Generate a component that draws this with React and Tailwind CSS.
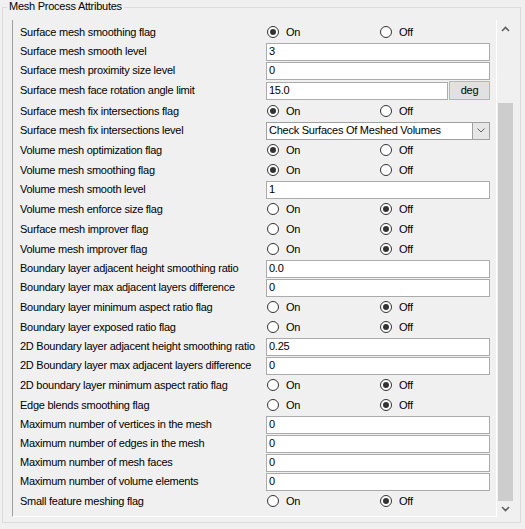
import React from 'react';

const rows = [
  { label: 'Surface mesh smoothing flag', type: 'radio', on: true },
  { label: 'Surface mesh smooth level', type: 'text', value: '3' },
  { label: 'Surface mesh proximity size level', type: 'text', value: '0' },
  { label: 'Surface mesh face rotation angle limit', type: 'unit', value: '15.0', unit: 'deg' },
  { label: 'Surface mesh fix intersections flag', type: 'radio', on: true },
  { label: 'Surface mesh fix intersections level', type: 'select', value: 'Check Surfaces Of Meshed Volumes' },
  { label: 'Volume mesh optimization flag', type: 'radio', on: true },
  { label: 'Volume mesh smoothing flag', type: 'radio', on: true },
  { label: 'Volume mesh smooth level', type: 'text', value: '1' },
  { label: 'Volume mesh enforce size flag', type: 'radio', on: false },
  { label: 'Surface mesh improver flag', type: 'radio', on: false },
  { label: 'Volume mesh improver flag', type: 'radio', on: false },
  { label: 'Boundary layer adjacent height smoothing ratio', type: 'text', value: '0.0' },
  { label: 'Boundary layer max adjacent layers difference', type: 'text', value: '0' },
  { label: 'Boundary layer minimum aspect ratio flag', type: 'radio', on: false },
  { label: 'Boundary layer exposed ratio flag', type: 'radio', on: false },
  { label: '2D Boundary layer adjacent height smoothing ratio', type: 'text', value: '0.25' },
  { label: '2D Boundary layer max adjacent layers difference', type: 'text', value: '0' },
  { label: '2D boundary layer minimum aspect ratio flag', type: 'radio', on: false },
  { label: 'Edge blends smoothing flag', type: 'radio', on: false },
  { label: 'Maximum number of vertices in the mesh', type: 'text', value: '0' },
  { label: 'Maximum number of edges in the mesh', type: 'text', value: '0' },
  { label: 'Maximum number of mesh faces', type: 'text', value: '0' },
  { label: 'Maximum number of volume elements', type: 'text', value: '0' },
  { label: 'Small feature meshing flag', type: 'radio', on: false },
];

const Radio = ({ checked, label }) => (
  <div className="flex items-center">
    <span className="w-[12px] h-[12px] rounded-full border border-[#333333] bg-white flex items-center justify-center">
      {checked && <span className="w-[6px] h-[6px] rounded-full bg-[#333333]" />}
    </span>
    <span className="ml-[7px]">{label}</span>
  </div>
);

const TextBox = ({ value, className = 'w-[224px]' }) => (
  <div className={`${className} h-[18px] border border-[#ababab] bg-white pl-[2px] flex items-center`}>
    {value}
  </div>
);

const Control = ({ row }) => {
  switch (row.type) {
    case 'radio':
      return (
        <div className="flex items-center pl-[1px]">
          <div className="w-[113px]">
            <Radio checked={row.on} label="On" />
          </div>
          <Radio checked={!row.on} label="Off" />
        </div>
      );
    case 'text':
      return <TextBox value={row.value} />;
    case 'unit':
      return (
        <div className="flex items-center gap-[1px]">
          <TextBox value={row.value} className="w-[182px]" />
          <div className="w-[41px] h-[19px] border border-[#f3a85a] bg-[#e1e1e1] flex items-center justify-center">
            {row.unit}
          </div>
        </div>
      );
    case 'select':
      return (
        <div className="w-[224px] h-[18px] border border-[#a0a0a0] bg-white flex">
          <div className="flex-1 pl-[2px] flex items-center">{row.value}</div>
          <div className="w-[17px] h-full bg-[#e6e6e6] border-l border-[#a0a0a0] flex items-center justify-center">
            <svg width="8" height="5" viewBox="0 0 8 5" fill="none">
              <path d="M0.5 0.5L4 4L7.5 0.5" stroke="#606060" strokeWidth="1" />
            </svg>
          </div>
        </div>
      );
    default:
      return null;
  }
};

const rowHeight = (type) => {
  if (type === 'radio') return 'h-[20px]';
  if (type === 'unit') return 'h-[21px]';
  return 'h-[19px]';
};

const Chevron = ({ up }) => (
  <svg width="9" height="6" viewBox="0 0 9 6" fill="none">
    <path
      d={up ? 'M1 5L4.5 1.5L8 5' : 'M1 1L4.5 4.5L8 1'}
      stroke="#606060"
      strokeWidth="1.6"
    />
  </svg>
);

export default function App() {
  return (
    <div
      className="w-[525px] h-[529px] bg-[#f0f0f0] pt-[7px] pl-[2px] text-[11px] tracking-[-0.25px] text-black"
      style={{ fontFamily: '"Liberation Sans", Arial, sans-serif' }}
    >
      <div className="relative w-[519px] h-[516px] border border-[#dcdcdc] pl-[9px] pt-[12px] flex">
        {/* Group title */}
        <span className="absolute left-[4px] top-[-8px] px-[2px] leading-[13px] bg-[#f0f0f0]">
          Mesh Process Attributes
        </span>

        {/* Attribute rows */}
        <div className="w-[485px] h-[497px] border-l border-r border-b border-l-[#a0a0a0] border-r-white border-b-white pt-[2px] pl-[7px] overflow-hidden">
          {rows.map((row) => (
            <div key={row.label} className={`flex items-center ${rowHeight(row.type)}`}>
              <div className="w-[246px] shrink-0 whitespace-nowrap">{row.label}</div>
              <Control row={row} />
            </div>
          ))}
        </div>

        {/* Scrollbar */}
        <div className="w-[17px] h-[497px] flex flex-col">
          <div className="h-[17px] flex items-center justify-center">
            <Chevron up />
          </div>
          <div className="h-[66px]" />
          <div className="h-[398px] px-[1px]">
            <div className="h-full bg-[#cdcdcd]" />
          </div>
          <div className="h-[16px] flex items-center justify-center">
            <Chevron />
          </div>
        </div>
      </div>
    </div>
  );
}
